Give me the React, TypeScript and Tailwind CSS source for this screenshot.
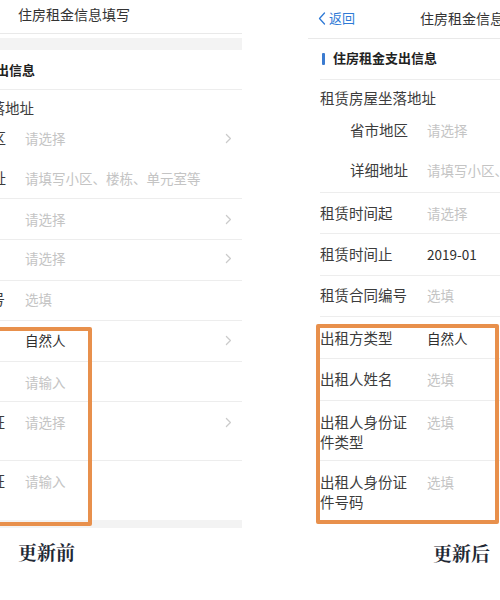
import React from "react";

const Chevron = () => (
  <svg width="7" height="11" viewBox="0 0 7 11" className="shrink-0">
    <path d="M1.4 1.5 L5.4 5.5 L1.4 9.5" fill="none" stroke="#cbcbcb" strokeWidth="1.2" strokeLinecap="round" strokeLinejoin="round" />
  </svg>
);

type RowProps = {
  cls: string;
  label: React.ReactNode;
  value?: string;
  dark?: boolean;
  chevron?: boolean;
  sub?: boolean;
  border?: boolean;
};

const Row = ({ cls, label, value, dark, chevron, sub, border = true }: RowProps) => (
  <div className={`flex items-start ${border ? "border-b border-[#ededed]" : ""} ${cls}`}>
    <div className={`shrink-0 text-[14.5px] leading-[20px] text-[#3c3c3c] ${sub ? "w-[77px]" : "w-[107px] pr-[13px]"}`}>
      {label}
    </div>
    <div className={`flex-1 text-[13.5px] leading-[20px] ${dark ? "text-[#2f2f2f]" : "text-[#c4c4c4]"}`}>{value}</div>
    {chevron && (
      <div className="pr-[10px] pt-[5px]">
        <Chevron />
      </div>
    )}
  </div>
);

const LeftScreen = () => (
  <div className="w-[336px] ml-[-94px]">
    <div className="h-[34px] border-b border-[#e9e9e9] pt-[4px] text-center text-[14px] leading-[20px] text-[#333]">
      住房租金信息填写
    </div>
    <div className="h-[4px]" />
    <div className="h-[12px] bg-[#f3f3f3]" />
    <div className="h-[40px] border-b border-[#ededed] pl-[25px] pt-[10px] text-[13px] leading-[20px] font-bold text-[#222] flex items-start">
      住房租金支出信息
    </div>
    <div className="h-[36px] pl-[12px] pt-[8px] text-[14.5px] leading-[20px] text-[#3c3c3c]">租赁房屋坐落地址</div>
    <Row cls="h-[32px] pt-[2px] pl-[42px]" sub border={false} label="省市地区" value="请选择" chevron />
    <Row cls="h-[41px] pt-[10px] pl-[42px]" sub label="详细地址" value="请填写小区、楼栋、单元室等" />
    <Row cls="h-[41px] pt-[10px] pl-[12px]" label="租赁时间起" value="请选择" chevron />
    <Row cls="h-[41px] pt-[8px] pl-[12px]" label="租赁时间止" value="请选择" chevron />
    <Row cls="h-[40px] pt-[8px] pl-[12px]" label="租赁合同编号" value="选填" />
    <Row cls="h-[41px] pt-[9px] pl-[12px]" label="出租方类型" value="自然人" dark chevron />
    <Row cls="h-[40px] pt-[10px] pl-[12px]" label="出租人姓名" value="请输入" />
    <Row cls="h-[59px] pt-[10px] pl-[12px]" label="出租人身份证件类型" value="请选择" chevron />
    <Row cls="h-[59px] pt-[10px] pl-[12px]" border={false} label="出租人身份证件号码" value="请输入" />
    <div className="h-[8px] bg-[#f3f3f3]" />
  </div>
);

const RightScreen = () => (
  <div className="w-[336px]">
    <div className="h-[39px] border-b border-[#e9e9e9] pt-[8px] relative">
      <div className="absolute left-[10px] top-[8px] flex items-center gap-[3px] text-[13px] leading-[20px] text-[#2f7ad6]">
        <svg width="8" height="13" viewBox="0 0 8 13">
          <path d="M6.5 1 L1.5 6.5 L6.5 12" fill="none" stroke="#2f7ad6" strokeWidth="1.3" strokeLinecap="round" strokeLinejoin="round" />
        </svg>
        <span>返回</span>
      </div>
      <div className="text-center text-[14px] leading-[20px] text-[#333]">住房租金信息填写</div>
    </div>
    <div className="h-[41px] border-b border-[#ededed] ml-[12px] flex items-start pt-[9px]">
      <div className="w-[3px] h-[12px] bg-[#3b7bd0] mt-[5px] ml-[2px] mr-[8px] rounded-[1px]" />
      <div className="text-[13px] leading-[20px] font-bold text-[#222]">住房租金支出信息</div>
    </div>
    <div className="h-[34px] pl-[12px] pt-[8px] text-[14.5px] leading-[20px] text-[#3c3c3c]">租赁房屋坐落地址</div>
    <Row cls="h-[36px] pt-[6px] pl-[42px]" sub border={false} label="省市地区" value="请选择" chevron />
    <div className="border-b border-[#ededed] ml-[12px]">
      <Row cls="h-[42px] pt-[10px] pl-[30px]" sub border={false} label="详细地址" value="请填写小区、楼栋、单元室等" />
    </div>
    <div className="ml-[12px]">
      <Row cls="h-[41px] pt-[10px]" label="租赁时间起" value="请选择" chevron />
      <Row cls="h-[42px] pt-[10px]" label="租赁时间止" value="2019-01" dark chevron />
      <Row cls="h-[41px] pt-[9px]" label="租赁合同编号" value="选填" />
      <Row cls="h-[42px] pt-[11px]" label="出租方类型" value="自然人" dark chevron />
      <Row cls="h-[42px] pt-[10px]" label="出租人姓名" value="选填" />
      <Row cls="h-[60px] pt-[11px]" label="出租人身份证件类型" value="选填" />
      <Row cls="h-[59px] pt-[11px]" border={false} label="出租人身份证件号码" value="选填" />
    </div>
  </div>
);

export default function App() {
  return (
    <div className="relative w-[500px] h-[600px] overflow-hidden bg-white flex font-['Noto_Sans_CJK_SC',sans-serif]">
      <div className="w-[242px] shrink-0 overflow-hidden">
        <LeftScreen />
        <div className="mt-[12px] pl-[18px] text-[19px] leading-[24px] font-bold text-[#1f2935] font-['Noto_Serif_CJK_SC','Noto_Sans_CJK_SC',serif]">
          更新前
        </div>
      </div>
      <div className="w-[66px] shrink-0" />
      <div className="w-[192px] shrink-0 overflow-hidden">
        <RightScreen />
        <div className="mt-[21px] pl-[125px] text-[19px] leading-[24px] font-bold text-[#1f2935] font-['Noto_Serif_CJK_SC','Noto_Sans_CJK_SC',serif]">
          更新后
        </div>
      </div>
      <div className="absolute left-[-10px] top-[327px] w-[102px] h-[199px] border-[4px] border-[#e8904c] rounded-[2px]" />
      <div className="absolute left-[316px] top-[324px] w-[183px] h-[200px] border-[4px] border-[#e8904c] rounded-[2px]" />
    </div>
  );
}
